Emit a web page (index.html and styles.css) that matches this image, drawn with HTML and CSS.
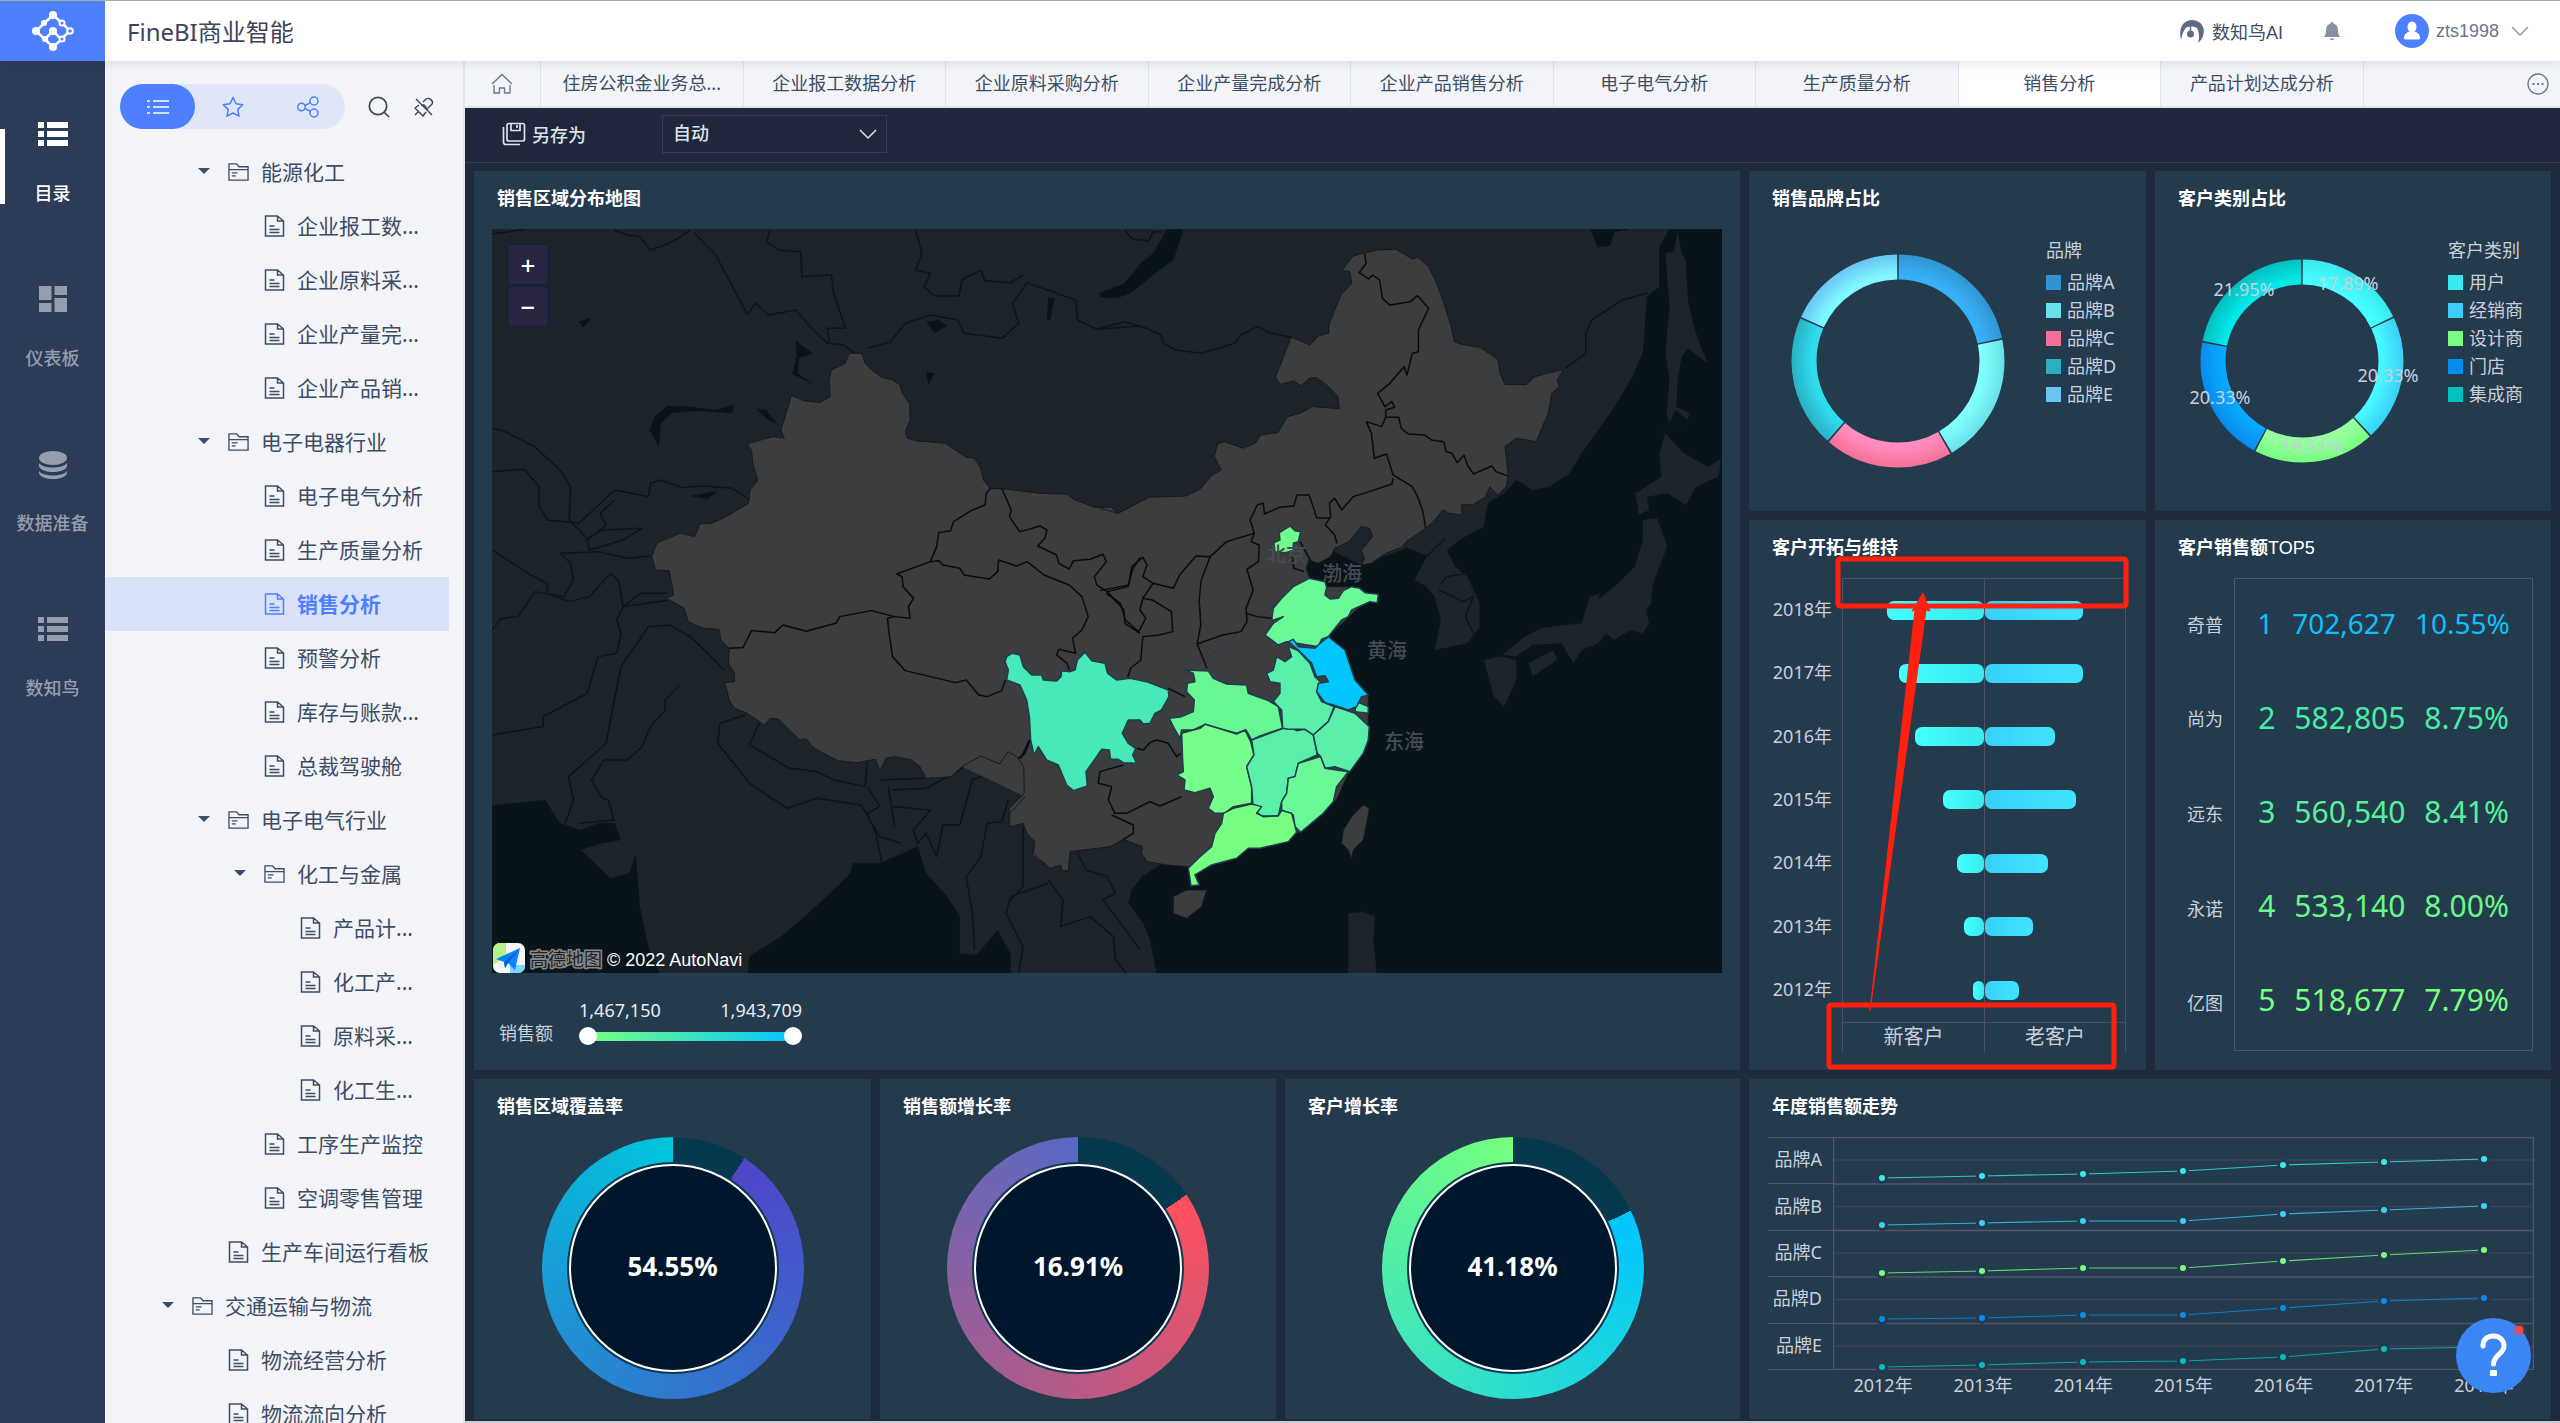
FILE: index.html
```html
<!DOCTYPE html>
<html lang="zh-CN">
<head>
<meta charset="UTF-8">
<meta name="viewport" content="width=device-width, initial-scale=1.0">
<title>FineBI商业智能</title>
<link rel="stylesheet" href="styles.css">
</head>
<body>
<svg class="sprite" aria-hidden="true">
    <symbol id="doc" viewBox="0 0 20 22">
        <path d="M1 1h12l6 5v15H1zM13 1v5h6M5 11h5M5 14.500h10M5 17.500h10" fill="none" stroke="currentColor" stroke-width="1.5"/>
    </symbol>
    <symbol id="folder" viewBox="0 0 22 20">
        <path d="M1 18.500v-17h8l2.500 3H21v14zM1 7.500h20M4 11h6M4 14h4" fill="none" stroke="currentColor" stroke-width="1.4"/>
    </symbol>
    <symbol id="list" viewBox="0 0 30 26">
        <path d="M0 1h6v6H0zM9 1h21v6H9zM0 10h6v6H0zM9 10h21v6H9zM0 19h6v6H0zM9 19h21v6H9z" fill="currentColor"/>
    </symbol>
    <marker id="dot" viewBox="-7 -7 14 14" markerWidth="14" markerHeight="14" markerUnits="userSpaceOnUse"><circle r="6" fill="#243a4d"/><circle r="3" fill="context-stroke"/></marker>
</svg>

<header class="topbar">
    <div class="logo">
        <svg width="44" height="44" viewBox="0 0 44 44" fill="none" stroke="#fff" stroke-width="2.5">
            <path d="M5 22 22 6M5 22l17 16M22 6l9 8M22 38l8-7M14 30l8-8 8 8M31 14l8 8-9 8"/>
            <g fill="#fff" stroke="none">
                <circle cx="5" cy="22" r="4"/><circle cx="22" cy="6" r="4"/><circle cx="22" cy="38" r="4"/>
                <circle cx="22" cy="22" r="4"/><circle cx="13" cy="14" r="3"/><circle cx="14" cy="30" r="3"/>
            </g>
            <g fill="#4d7fff" stroke-width="2">
                <circle cx="31" cy="14" r="2.5"/><circle cx="39" cy="22" r="2.8"/><circle cx="31" cy="30" r="2.5"/>
            </g>
        </svg>
    </div>
    <h1>FineBI商业智能</h1>
    <div class="top-tools">
        <a class="ai" href="#">
            <svg width="25" height="25" viewBox="0 0 25 25"><path d="M1 21C-2 8 4 1 12 1c9 0 14 8 11 16-1 3-3 5-5 7 2-6 1-11-1-15-5-2-10-2-12 1-2 3-3 6-4 11z" fill="#5d6b82"/><circle cx="10.5" cy="15" r="3.5" fill="#5d6b82"/><path d="M10.500 7v7" stroke="#5d6b82" stroke-width="1.5"/></svg>
            数知鸟AI
        </a>
        <button class="bell" aria-label="消息">
            <svg width="18" height="20" viewBox="0 0 18 20"><path d="M9 1c1 0 1.500.7 1.500 1.500C13.500 3.500 15 6 15 9c0 4 .8 5.500 2 7H1c1.200-1.500 2-3 2-7 0-3 1.500-5.500 4.500-6.500C7.500 1.700 8 1 9 1zM6.800 17.500h4.400c-.5 2-3.900 2-4.400 0z" fill="#8590a5"/></svg>
        </button>
        <button class="user">
            <svg width="34" height="34" viewBox="0 0 34 34"><circle cx="17" cy="17" r="17" fill="#4d7fff"/><ellipse cx="17" cy="13" rx="4.5" ry="5.5" fill="#fff"/><path d="M9 24c0-4 3-6 6-6.500h4c3 .5 6 2.500 6 6.500 0 1-1 1.500-2 1.500H11c-1 0-2-.5-2-1.500z" fill="#fff"/></svg>
            <span>zts1998</span>
            <svg width="18" height="10" viewBox="0 0 18 10"><path d="m1 1 8 8 8-8" fill="none" stroke="#8f9aad" stroke-width="1.5"/></svg>
        </button>
    </div>
</header>

<div class="shell">
    <nav class="side">
        <a class="side-item current" href="#"><svg width="30" height="28"><use href="#list"/></svg>目录</a>
        <a class="side-item" href="#"><svg width="30" height="28" viewBox="0 0 30 28"><path d="M1 1h12.500v14H1zM1 18h12.500v9H1zM16.500 1H29v9H16.500zM16.500 13H29v14H16.500z" fill="currentColor"/></svg>仪表板</a>
        <a class="side-item" href="#"><svg width="30" height="30" viewBox="0 0 30 30"><ellipse cx="15" cy="8" rx="14" ry="7" fill="currentColor"/><path d="M1 13c4 6 24 6 28 0v3c-2 8-26 8-28 0zM1 21c4 6 24 6 28 0v2c-2 8-26 8-28 0z" fill="currentColor"/></svg>数据准备</a>
        <a class="side-item" href="#"><svg width="30" height="28"><use href="#list"/></svg>数知鸟</a>
    </nav>

    <aside class="catalog">
        <div class="catalog-tools">
            <div class="switch">
                <button class="on" aria-label="目录"><svg width="24" height="20" viewBox="0 0 24 20"><path d="M1 4h3M7 4h16M1 10h3M7 10h16M1 16h3M7 16h16" stroke="#fff" stroke-width="1.6"/></svg></button>
                <button aria-label="收藏"><svg width="22" height="22" viewBox="0 0 22 22"><path d="m11 1.500 3 6.300 6.700.9-4.900 4.700 1.200 6.800-6-3.200-6 3.200 1.200-6.800L1.300 8.700 8 7.800z" fill="none" stroke="#4d7fff" stroke-width="1.5" stroke-linejoin="round"/></svg></button>
                <button aria-label="分享"><svg width="22" height="22" viewBox="0 0 22 22" fill="none" stroke="#4d7fff" stroke-width="1.5"><circle cx="4.5" cy="11" r="3.7"/><circle cx="17" cy="5" r="4"/><circle cx="17" cy="17" r="4"/><path d="m8 9.500 5.500-2.800M8 12.500l5.500 2.800"/></svg></button>
            </div>
            <button class="tool" aria-label="搜索"><svg width="22" height="22" viewBox="0 0 22 22" fill="none" stroke="#3d4459" stroke-width="1.7"><circle cx="10" cy="10" r="8.7"/><path d="m16 16 5 5"/></svg></button>
            <button class="tool" aria-label="取消固定"><svg width="20" height="20" viewBox="0 0 20 20" fill="none" stroke="#3d4459" stroke-width="1.4"><path d="M2 2l16 16M9 5l3-3c3-2 8 2 6 5l-4 4M5 8l-4 3 8 8 3-4M1 18l4-4M7 8h3l4 5"/></svg></button>
        </div>
        <ul class="tree">
            <li><a class="row l1 folder" href="#"><i></i><svg><use href="#folder"/></svg>能源化工</a></li>
            <li><a class="row l2" href="#"><svg><use href="#doc"/></svg>企业报工数...</a></li>
            <li><a class="row l2" href="#"><svg><use href="#doc"/></svg>企业原料采...</a></li>
            <li><a class="row l2" href="#"><svg><use href="#doc"/></svg>企业产量完...</a></li>
            <li><a class="row l2" href="#"><svg><use href="#doc"/></svg>企业产品销...</a></li>
            <li><a class="row l1 folder" href="#"><i></i><svg><use href="#folder"/></svg>电子电器行业</a></li>
            <li><a class="row l2" href="#"><svg><use href="#doc"/></svg>电子电气分析</a></li>
            <li><a class="row l2" href="#"><svg><use href="#doc"/></svg>生产质量分析</a></li>
            <li><a class="row l2 selected" href="#"><svg><use href="#doc"/></svg>销售分析</a></li>
            <li><a class="row l2" href="#"><svg><use href="#doc"/></svg>预警分析</a></li>
            <li><a class="row l2" href="#"><svg><use href="#doc"/></svg>库存与账款...</a></li>
            <li><a class="row l2" href="#"><svg><use href="#doc"/></svg>总裁驾驶舱</a></li>
            <li><a class="row l1 folder" href="#"><i></i><svg><use href="#folder"/></svg>电子电气行业</a></li>
            <li><a class="row l2 folder" href="#"><i></i><svg><use href="#folder"/></svg>化工与金属</a></li>
            <li><a class="row l3" href="#"><svg><use href="#doc"/></svg>产品计...</a></li>
            <li><a class="row l3" href="#"><svg><use href="#doc"/></svg>化工产...</a></li>
            <li><a class="row l3" href="#"><svg><use href="#doc"/></svg>原料采...</a></li>
            <li><a class="row l3" href="#"><svg><use href="#doc"/></svg>化工生...</a></li>
            <li><a class="row l2" href="#"><svg><use href="#doc"/></svg>工序生产监控</a></li>
            <li><a class="row l2" href="#"><svg><use href="#doc"/></svg>空调零售管理</a></li>
            <li><a class="row l1" href="#"><svg><use href="#doc"/></svg>生产车间运行看板</a></li>
            <li><a class="row l0 folder" href="#"><i></i><svg><use href="#folder"/></svg>交通运输与物流</a></li>
            <li><a class="row l1" href="#"><svg><use href="#doc"/></svg>物流经营分析</a></li>
            <li><a class="row l1" href="#"><svg><use href="#doc"/></svg>物流流向分析</a></li>
        </ul>
    </aside>

    <main class="content">
        <div class="tabs">
            <a class="home" href="#" aria-label="首页"><svg width="22" height="22" viewBox="0 0 22 22"><path d="M1 11 11 1.500 21 11M3 12v8h5.500v-5h5v5H19v-8" fill="none" stroke="#68758a" stroke-width="1.3"/></svg></a>
            <div class="tab-list">
                <a href="#">住房公积金业务总...</a>
                <a href="#">企业报工数据分析</a>
                <a href="#">企业原料采购分析</a>
                <a href="#">企业产量完成分析</a>
                <a href="#">企业产品销售分析</a>
                <a href="#">电子电气分析</a>
                <a href="#">生产质量分析</a>
                <a class="active" href="#">销售分析</a>
                <a href="#">产品计划达成分析</a>
            </div>
            <button class="more" aria-label="更多"><svg width="22" height="22" viewBox="0 0 22 22"><circle cx="11" cy="11" r="10" fill="none" stroke="#68758a" stroke-width="1.3"/><path d="M5.500 10h2v2h-2zM10 10h2v2h-2zM14.500 10h2v2h-2z" fill="#68758a"/></svg></button>
        </div>

        <div class="toolbar">
            <button class="save-as"><svg width="24" height="24" viewBox="0 0 24 24" fill="none" stroke="currentColor" stroke-width="1.7"><rect x="5" y="1.5" width="17.5" height="17.5" rx="2"/><path d="M9 1.500v7h9v-7M15 3v3M1.500 5v15a2.500 2.500 0 0 0 2.500 2.500h14"/></svg>另存为</button>
            <select class="fit" aria-label="适应方式"><option>自动</option></select>
        </div>

        <div class="board">
            <section class="card map-card">
                <h2>销售区域分布地图</h2>
                <div class="map">
                    <svg class="map-canvas" viewBox="0 0 1230 744" preserveAspectRatio="xMidYMid slice">
                        <rect class="land" width="1230" height="744"/>
                        <!-- seas and lakes -->
                        <g class="sea">
                            <g transform="matrix(.4082 0 0 .3333 608 -9)">
                                <path d="M1395 27 1370 80 1370 200 1340 230 1330 400 1300 480 1250 580 1180 700 1150 760 1100 800 1060 810 1020 780 990 820 950 850 940 920 880 960 850 990 870 1040 900 1070 930 1150 930 1220 900 1270 820 1290 835 1200 820 1130 800 1100 770 1080 800 1010 750 985 640 1035 500 950 500 1540 1530 1540 1530 27z"/>
                                <path d="M205 27 180 120 130 165 80 215 40 235 0 230V218L60 190 100 130 130 100 165 27zM1200 27l20 55 30-5 10-40 40-10z"/>
                            </g>
                            <g transform="matrix(.3333 0 0 .3333 468 271)">
                                <path d="M1000 250 1400 600 2300 600V1425H590L570 1320 550 1270 505 1210 515 1170 545 1130 600 1095 900 900z"/>
                            </g>
                            <g transform="matrix(.4209 0 0 .3333 -12 -9)">
                                <path d="M20 1757 155 1740 190 1810 240 1830 280 1810 320 1810 335 1860 290 1870 240 1890 310 1975 355 1960 370 1900 380 2060 400 2180 430 2270H20z"/>
                                <path d="M635 2270 640 2210 715 2150 780 2080 840 2010 880 1960 885 1930 950 1930 1040 1880 1060 1960 1110 2030 1140 2090 1140 2200 1180 2205 1230 2130 1260 2200 1262 2270z"/>
                                <path d="M425 680 403 630 415 590 445 558 500 560 560 570 603 555 600 580 520 572 455 580 430 610zM500 828 565 812 540 838zM655 565 680 570 708 615 685 600zM750 362 790 400 758 415 755 460 795 495 742 462 752 410zM1060 305 1090 300 1110 318 1080 340zM1350 232 1365 235 1355 300 1347 300zM1470 220 1530 205 1568 155V195L1530 228 1485 235zM1060 455l20 5-15 35zM235 305l30-12-20 30z"/>
                            </g>
                        </g>
                        <!-- Sakhalin, Japan, Luzon -->
                        <g class="land">
                            <path transform="matrix(.4082 0 0 .3333 608 -9)" d="M1385 100 1405 95 1415 35 1425 100 1435 120 1440 240 1455 320 1475 390 1490 430 1440 385 1425 410 1415 480 1412 560 1445 580 1440 600 1410 570 1395 610 1388 580 1395 480 1385 400 1395 260zM1385 640 1430 700 1490 740 1522 715 1515 770 1460 800 1435 855 1390 820 1340 830 1345 870 1320 885 1312 820 1375 770 1370 700zM1330 900 1365 895 1390 980 1355 1090 1350 1150 1338 1170 1345 1210 1330 1240 1300 1230 1260 1260 1240 1240 1220 1270 1180 1290 1160 1330 1130 1270 1060 1275 1020 1310 985 1305 1040 1250 1080 1225 1140 1215 1180 1210 1200 1130 1225 1120 1220 1140 1270 1090 1310 1040 1330 960zM940 1320 980 1310 1020 1320 1020 1380 990 1460 965 1430zM1050 1330 1110 1290 1120 1320 1060 1370z"/>
                            <path transform="matrix(.3333 0 0 .3333 468 271)" d="M1165 1240 1210 1235 1245 1250 1240 1320 1250 1420H1165z"/>
                        </g>
                        <!-- borders and rivers of the neighbours -->
                        <g class="abroad">
                            <path transform="matrix(.4209 0 0 .3333 -12 -9)" d="M29 42 110 28M320 32 350 45 380 50 405 90 440 75 470 55 500 30M510 40 560 105 635 283 655 250 685 285 750 270 785 320 825 370 865 375 890 400M920 385 975 365 1010 310 1070 285 1135 300 1150 340 1240 355 1280 310 1265 250 1300 188 1415 240 1420 300 1465 328 1568 318M690 30 680 65 710 90 762 95 765 170 835 165 840 220 868 325 825 325 830 365M1035 30 1050 100 1035 150 1070 160 1055 200 1080 228 1138 228 1145 180 1190 150 1200 182 1260 188 1290 165M29 625 60 635 130 680 190 750 215 800 212 900 250 950M29 755 105 748 140 800 140 858 160 900 235 910 320 810 400 830 405 790 430 780 480 803 530 797 600 805 640 840M250 960 290 930 385 925 340 960 260 990 255 960 300 915 285 880 320 840M29 990 120 1065 160 1090 160 1120 210 1145 260 1130 310 1060 330 1085 340 1160 450 1140M29 1230 50 1195 90 1190 130 1115 200 1130 222 1080 215 1030 190 1000 280 995 350 1015 405 1008M340 1160 380 1120 445 1120M340 1160 325 1200 335 1240 325 1300 280 1310 255 1420 150 1490 150 1520 29 1545M475 1395 440 1440 440 1470 405 1520 385 1580 350 1620 295 1620 265 1680 290 1735 305 1740 318 1800 235 1810M580 1350 500 1250 450 1215 400 1220 335 1340 310 1500 300 1570 210 1670 222 1740 200 1820M630 1485 570 1510 565 1570 640 1690 730 1765 800 1735 905 1755 950 1850 1000 1870M665 1505 640 1575 735 1645 800 1655 840 1680 915 1700 920 1625M920 1700 950 1760 920 1780 940 1840 955 1930M980 1760 1070 1770 1030 1830 1040 1870 1060 1840 1085 1910 1100 1815 1140 1815 1170 1680 1230 1650M950 1680 1060 1675M970 1700 985 1820M980 1710 1060 1705 1190 1615M1255 1740 1240 1805 1205 1810 1190 1910 1155 1970 1170 2080 1175 2190M1290 1820 1290 2000 1255 2050M1420 1900 1440 1950 1490 1970 1510 2020 1480 2040 1540 2140 1568 2190M1350 1990 1260 2030 1250 2080 1290 2180 1280 2260M1350 1980 1385 2040 1380 2120 1450 2090 1505 2150 1510 2220 1535 2260"/>
                            <path transform="matrix(.4082 0 0 .3333 608 -9)" d="M0 325 60 305 115 325 150 345 155 370 185 390 250 400 330 370 345 345 385 320 420 340 470 352M1140 445 1190 400 1190 340 1205 300 1280 240 1340 220M750 985 800 1010 845 955M835 1090 850 1070 890 1062M830 1110 890 1145 915 1130 895 1190 915 1240M1370 628H1440M60 30 80 58 120 62 130 35 155 35"/>
                        </g>
                        <!-- provinces without data -->
                        <g class="empty">
                            <path class="plain" transform="matrix(.3333 0 0 .3333 468 271)" d="M0 60H900L1050 235 195 890 0 797z"/>
                            <path transform="matrix(.4209 0 0 .3333 -12 -9)" d="M1568 845 1515 880 1500 862 1460 862 1410 838 1395 823 1330 820 1240 806 1212 806 1196 780 1188 740 1175 715 1155 712 1105 670 1040 663 1015 655 1010 635 1022 600 1020 550 1003 520 998 495 980 480 955 472 935 455 915 430 908 400 877 400 868 430 835 450 830 480 832 530 808 548 770 542 740 527 715 630 723 655 695 650 635 672 645 690 648 730 660 780 642 810 638 850 585 890 550 910 522 912 510 950 475 940 420 970 408 1010 418 1050 450 1052 460 1125 442 1135 485 1165 495 1205 530 1225 568 1228 572 1260 592 1285 590 1330 605 1360 605 1385 582 1388 592 1440 605 1465 635 1480 675 1515 690 1495 710 1498 735 1530 760 1560 775 1557 790 1580 815 1600 850 1622 895 1628 940 1618 950 1655 965 1615 985 1610 1025 1620 1045 1640 1060 1675 1120 1670 1145 1640 1190 1608 1235 1632 1255 1595 1275 1610 1292 1640 1293 1720 1258 1765 1255 1820 1298 1813 1318 1865 1312 1905 1350 1942 1378 1935 1380 1952 1400 1955 1400 1900 1480 1880 1520 1860 1568 1870"/>
                            <path transform="matrix(.4082 0 0 .3333 608 -9)" d="M0 865 45 880 120 832 210 828 245 808 272 768 297 750 280 710 288 672 305 665 350 685 380 670 395 645 435 638 460 590 490 580 520 560 586 566 583 530 560 500 530 472 512 475 493 498 475 483 442 493 430 472 468 352 515 375 535 348 560 340 562 310 590 225 617 190 612 155 592 152 620 108 645 100 680 90 725 88 765 117 780 112 805 140 825 190 845 260 860 320 868 365 885 373 930 382 975 418 980 460 992 493 1045 494 1065 470 1135 448 1120 480 1125 500 1107 520 1098 580 1068 665 1020 655 992 680 1000 765 995 800 975 825 955 800 945 830 915 853 885 855 887 885 855 880 840 870 820 900 798 925 750 965 740 982 700 1000 665 1030 640 1035 648 1015 640 990 668 950 660 925 640 920 610 965 575 985 565 1010 535 1030 512 1020 505 1045 515 1078"/>
                            <path transform="matrix(.3333 0 0 .3333 468 271)" d="M1050 235 1100 260 1180 260 1250 290 1200 320 1105 410 1155 455 1185 540 1225 590 1225 690 1170 810 1130 900 1020 997 860 1045 800 1085 685 1100 620 1095 560 1085 545 1060 548 1040 490 1018 450 1040 415 1045 365 1050 330 1055 325 1112 305 1110 303 1095 270 1105 220 1060 225 1025 200 1000 190 970 150 980 150 940 195 890"/>
                            <path transform="matrix(.3333 0 0 .3333 468 271)" d="M640 1190 680 1170 740 1170 725 1220 680 1255 640 1240zM1210 915 1228 925 1220 970 1210 1020 1180 1050 1175 1078 1165 1050 1145 1030 1150 990 1175 950z"/>
                        </g>
                        <g class="province-line">
                            <path transform="matrix(.4209 0 0 .3333 -12 -9)" d="M592 1285 625 1283 645 1232 700 1238 720 1215 775 1234 845 1210 855 1190 930 1172 985 1190 1022 1195 1018 1160 1030 1135 1005 1100 1003 1070 990 1062 1070 1025 1085 980 1090 938 1118 932 1125 905 1170 870 1200 855 1203 820 1212 806M1240 806 1262 870 1258 890 1282 935 1305 928 1330 918 1347 930 1342 955 1325 978 1370 1005 1375 1030 1400 1047 1410 1022 1450 1018 1480 1003 1488 1025 1460 1070 1465 1095 1490 1115 1540 1100 1550 1050 1568 1012M1070 1025 1090 1022 1100 1035 1140 1045 1150 1065 1210 1077 1230 1055 1232 1020 1275 1038 1300 1025 1340 1065 1400 1095 1430 1130 1445 1190 1430 1230 1408 1255 1415 1300 1375 1288 1370 1305 1395 1330 1400 1350M985 1190 968 1195 972 1240 980 1310 1010 1352 1130 1388 1155 1380 1185 1425 1205 1430 1240 1412 1248 1380M1490 1115 1530 1170 1532 1210 1568 1240M1305 1560 1285 1615"/>
                            <path transform="matrix(.4082 0 0 .3333 608 -9)" d="M648 100 652 130 635 158 658 177 668 165 685 180 692 235 710 255 760 245 778 227 805 265 780 330 780 395 765 400 752 465 745 440 710 490 680 520 698 560 715 545 722 562 700 570 700 592M652 605 690 620 700 592 732 592 738 625 755 642 795 645 812 660 842 665 848 695 862 700 875 728 892 705 900 735 915 762 960 738 970 755 1000 768M652 605 665 640 672 715 702 702 718 765 765 800 778 830 790 870 798 925M718 775 715 792 660 815 620 830 592 870 575 835 562 850 565 890 552 915 575 945 580 970M565 895 530 893 525 870 512 825 482 825 475 858 440 862 403 882 400 850 385 855 368 900 378 940 370 965 390 975 388 1025 360 1048 375 1110 358 1165 360 1205 345 1235 300 1245 238 1272 247 1215 243 1140 248 1080 270 1010 310 965 378 940M358 1180 385 1190 425 1195M0 1112 70 1095 78 1040 105 1012 115 1035 105 1070 130 1090 180 1105 195 1065 235 1008 270 1010M15 1120 50 1150 62 1200 95 1235 112 1195 98 1170 105 1135 128 1140 175 1175 178 1235 145 1245 105 1250 100 1320 75 1345 68 1372M130 1090 105 1135M238 1272 262 1345M490 965 515 1020M470 1005 475 1045 500 1055"/>
                            <path transform="matrix(.3333 0 0 .3333 468 271)" d="M490 795 420 815 415 850 455 860 445 900 465 940 500 940 570 905 600 918 665 890M530 745 550 750 570 728 590 720 625 730 650 770 662 760M455 945 520 975 520 1000 490 1018M625 565 675 590M210 720 195 760 175 775"/>
                        </g>
                        <!-- provinces coloured by sales -->
                        <g class="sales" transform="matrix(.3333 0 0 .3333 468 271)">
                            <path fill="#47e9b8" d="M140 470 155 460 180 465 190 500 215 525 245 525 250 540 290 543 303 530 305 512 330 515 345 510 352 480 375 457 395 482 435 490 443 520 470 540 510 535 560 545 625 570 627 590 605 630 585 640 570 670 550 672 540 660 505 660 487 700 505 730 527 745 518 765 530 790 490 788 475 778 452 778 448 750 425 748 403 780 378 815 382 858 340 872 320 855 295 795 260 780 235 740 222 765 212 720 208 650 200 600 180 555 140 540 145 510 135 485z"/>
                            <path fill="#70fb8c" d="M990 78 1005 92 1022 95 1015 125 1000 130 1000 152 975 158 945 155 942 128 960 120 958 98z"/>
                            <path fill="#69f997" d="M1048 235 1095 245 1100 262 1095 285 1110 297 1135 295 1150 272 1175 260 1200 265 1215 278 1255 283 1252 308 1230 305 1175 330 1165 350 1145 360 1105 410 1085 418 1075 440 1025 432 980 425 955 435 915 405 940 370 970 350 935 362 940 325 965 295 1000 260z"/>
                            <path fill="#69f794" d="M675 510 745 513 760 535 800 552 860 555 865 580 925 602 955 620 968 685 900 708 875 720 858 690 830 700 775 685 735 673 700 690 665 690 660 715 640 680 628 655 665 650 700 635 703 600 680 575 682 550 705 545 700 520z"/>
                            <path fill="#76ff8a" d="M665 700 720 685 735 673 775 685 830 702 855 690 872 725 882 765 860 800 875 860 875 910 820 920 795 940 765 940 745 925 760 890 750 865 705 878 672 870 675 840 650 825 670 815 668 780z"/>
                            <path fill="#5af0aa" d="M875 720 985 680 1010 692 1035 688 1060 705 1072 765 1015 790 1005 830 985 835 980 880 965 905 955 948 905 948 880 930 875 860 860 800 882 765z"/>
                            <path fill="#5af0aa" d="M985 440 1015 452 1050 490 1065 530 1085 550 1070 575 1085 605 1122 620 1105 665 1060 705 1035 688 985 688 968 685 965 630 940 605 960 580 960 550 930 545 920 520 940 510 950 470 975 485 995 470z"/>
                            <path fill="#5af0aa" d="M1125 620 1185 640 1228 680 1225 720 1210 760 1170 815 1125 800 1095 805 1082 770 1072 760 1060 705 1105 665zM1190 605 1225 620 1225 640 1185 635z"/>
                            <path fill="#6bf997" d="M1082 770 1095 805 1165 815 1130 860 1120 905 1090 940 1022 997 1005 980 1000 945 965 930 965 905 980 880 985 835 1005 830 1015 790z"/>
                            <path fill="#76ff80" d="M790 940 820 925 875 912 905 920 890 940 910 950 955 948 965 932 995 940 1010 997 985 1025 900 1045 865 1045 830 1075 755 1095 705 1125 718 1155 693 1157 685 1105 720 1070 755 1040 765 1000 785 970z"/>
                            <path fill="#03c6ff" d="M985 425 1000 418 1015 440 1065 445 1080 430 1105 410 1155 450 1185 540 1225 585 1205 590 1190 620 1165 630 1120 615 1095 608 1070 575 1075 550 1105 545 1095 527 1070 530 1055 490 1015 450z"/>
                        </g>
                        <g class="place">
                            <text x="774" y="333">北京</text>
                            <text x="830" y="352">渤海</text>
                            <text x="875" y="429">黄海</text>
                            <text x="892" y="520">东海</text>
                        </g>
                    </svg>
                    <div class="zoom">
                        <button aria-label="放大">+</button>
                        <button aria-label="缩小">−</button>
                    </div>
                    <div class="credit">
                        <svg width="32" height="30" viewBox="0 0 32 30"><rect width="32" height="30" rx="7" fill="#f4f6f8"/><path d="M7 0h6v14L0 22V7a7 7 0 0 1 7-7z" fill="#b5f08c"/><path d="M17 22h15v1a7 7 0 0 1-7 7h-8z" fill="#7ad7ff"/><path d="M27 5 3 16l8 3 1 6 3-5 7 7z" fill="#0a84ff"/><path d="M27 5 11 19l1 6 3-5z" fill="#0562d8"/></svg>
                        <span class="amap">高德地图</span>
                        <span>© 2022 AutoNavi</span>
                    </div>
                </div>
                <div class="range-legend">
                    <span>销售额</span>
                    <div class="range">
                        <div class="range-values"><span>1,467,150</span><span>1,943,709</span></div>
                        <div class="range-track">
                            <input type="range" min="1467150" max="1943709" value="1467150" aria-label="最小值">
                            <input type="range" min="1467150" max="1943709" value="1943709" aria-label="最大值">
                        </div>
                    </div>
                </div>
            </section>

            <section class="card">
                <h2>销售品牌占比</h2>
                <div class="donut-row brand">
                    <svg class="donut" width="214" height="214" viewBox="-107 -107 214 214">
                        <defs>
                            <radialGradient id="b1" gradientUnits="userSpaceOnUse" r="107" cx="0" cy="0"><stop offset=".8" stop-color="#38b0f8"/><stop offset="1" stop-color="#3194d2"/></radialGradient>
                            <radialGradient id="b2" gradientUnits="userSpaceOnUse" r="107" cx="0" cy="0"><stop offset=".8" stop-color="#80ffff"/><stop offset="1" stop-color="#68dfe6"/></radialGradient>
                            <radialGradient id="b3" gradientUnits="userSpaceOnUse" r="107" cx="0" cy="0"><stop offset=".8" stop-color="#ff8cc0"/><stop offset="1" stop-color="#f57094"/></radialGradient>
                            <radialGradient id="b4" gradientUnits="userSpaceOnUse" r="107" cx="0" cy="0"><stop offset=".8" stop-color="#2fdcee"/><stop offset="1" stop-color="#2aafc2"/></radialGradient>
                            <radialGradient id="b5" gradientUnits="userSpaceOnUse" r="107" cx="0" cy="0"><stop offset=".8" stop-color="#80f8ff"/><stop offset="1" stop-color="#68c4f4"/></radialGradient>
                        </defs>
                        <g class="ring" transform="rotate(-90)">
                            <circle r="94" pathLength="360" stroke="url(#b1)" stroke-dasharray="77 283" stroke-dashoffset="-.5"/>
                            <circle r="94" pathLength="360" stroke="url(#b2)" stroke-dasharray="71 289" stroke-dashoffset="-78.5"/>
                            <circle r="94" pathLength="360" stroke="url(#b3)" stroke-dasharray="70 290" stroke-dashoffset="-150.5"/>
                            <circle r="94" pathLength="360" stroke="url(#b4)" stroke-dasharray="72 288" stroke-dashoffset="-221.5"/>
                            <circle r="94" pathLength="360" stroke="url(#b5)" stroke-dasharray="65 295" stroke-dashoffset="-294.5"/>
                        </g>
                    </svg>
                    <div class="legend">
                        <p>品牌</p>
                        <ul>
                            <li><i class="b1"></i>品牌A</li>
                            <li><i class="b2"></i>品牌B</li>
                            <li><i class="b3"></i>品牌C</li>
                            <li><i class="b4"></i>品牌D</li>
                            <li><i class="b5"></i>品牌E</li>
                        </ul>
                    </div>
                </div>
            </section>

            <section class="card">
                <h2>客户类别占比</h2>
                <div class="donut-row client">
                    <svg class="donut" width="202" height="202" viewBox="-101 -101 202 202">
                        <defs>
                            <radialGradient id="c1" gradientUnits="userSpaceOnUse" r="101" cx="0" cy="0"><stop offset=".8" stop-color="#47ffff"/><stop offset="1" stop-color="#38eaf0"/></radialGradient>
                            <radialGradient id="c2" gradientUnits="userSpaceOnUse" r="101" cx="0" cy="0"><stop offset=".8" stop-color="#47f8ff"/><stop offset="1" stop-color="#3bcff8"/></radialGradient>
                            <radialGradient id="c3" gradientUnits="userSpaceOnUse" r="101" cx="0" cy="0"><stop offset=".8" stop-color="#98ffa0"/><stop offset="1" stop-color="#76ff80"/></radialGradient>
                            <radialGradient id="c4" gradientUnits="userSpaceOnUse" r="101" cx="0" cy="0"><stop offset=".8" stop-color="#08a8ff"/><stop offset="1" stop-color="#088cee"/></radialGradient>
                            <radialGradient id="c5" gradientUnits="userSpaceOnUse" r="101" cx="0" cy="0"><stop offset=".8" stop-color="#02e8e8"/><stop offset="1" stop-color="#02bfc0"/></radialGradient>
                        </defs>
                        <g class="ring" transform="rotate(-90)">
                            <circle r="89" pathLength="360" stroke="url(#c1)" stroke-dasharray="63.4 296.6" stroke-dashoffset="-.5"/>
                            <circle r="89" pathLength="360" stroke="url(#c2)" stroke-dasharray="72.2 287.8" stroke-dashoffset="-64.9"/>
                            <circle r="89" pathLength="360" stroke="url(#c3)" stroke-dasharray="69.2 290.8" stroke-dashoffset="-138.1"/>
                            <circle r="89" pathLength="360" stroke="url(#c4)" stroke-dasharray="72.2 287.8" stroke-dashoffset="-208.3"/>
                            <circle r="89" pathLength="360" stroke="url(#c5)" stroke-dasharray="78 282" stroke-dashoffset="-281.5"/>
                        </g>
                        <g class="share">
                            <text x="46" y="-71">17.89%</text>
                            <text x="86" y="21">20.33%</text>
                            <text x="10" y="92">19.51%</text>
                            <text x="-82" y="43">20.33%</text>
                            <text x="-58" y="-65">21.95%</text>
                        </g>
                    </svg>
                    <div class="legend">
                        <p>客户类别</p>
                        <ul>
                            <li><i class="c1"></i>用户</li>
                            <li><i class="c2"></i>经销商</li>
                            <li><i class="c3"></i>设计商</li>
                            <li><i class="c4"></i>门店</li>
                            <li><i class="c5"></i>集成商</li>
                        </ul>
                    </div>
                </div>
            </section>

            <section class="card">
                <h2>客户开拓与维持</h2>
                <div class="pyramid">
                    <span>2018年</span><div class="new"><b style="width:69%"></b></div><div class="old"><b style="width:70%"></b></div>
                    <span>2017年</span><div class="new"><b style="width:60%"></b></div><div class="old"><b style="width:70%"></b></div>
                    <span>2016年</span><div class="new"><b style="width:49%"></b></div><div class="old"><b style="width:50%"></b></div>
                    <span>2015年</span><div class="new"><b style="width:29%"></b></div><div class="old"><b style="width:65%"></b></div>
                    <span>2014年</span><div class="new"><b style="width:19%"></b></div><div class="old"><b style="width:45%"></b></div>
                    <span>2013年</span><div class="new"><b style="width:14%"></b></div><div class="old"><b style="width:34%"></b></div>
                    <span>2012年</span><div class="new"><b style="width:8%"></b></div><div class="old"><b style="width:24%"></b></div>
                    <span></span><div class="axis">新客户</div><div class="axis">老客户</div>
                </div>
                <svg class="markup" viewBox="0 0 397 550" preserveAspectRatio="none">
                    <g fill="none" stroke="#ff2010" stroke-width="5">
                        <rect x="89" y="39" width="288" height="47" rx="2"/>
                        <rect x="80" y="485" width="285" height="62" rx="2"/>
                    </g>
                    <path d="M121 491 166 90l-3 1 11-18 7 18-4-1z" fill="#ff2010" stroke="#ff2010"/>
                </svg>
            </section>

            <section class="card">
                <h2>客户销售额<span>TOP5</span></h2>
                <div class="top5">
                    <div class="names"><span>奇普</span><span>尚为</span><span>远东</span><span>永诺</span><span>亿图</span></div>
                    <div class="ranks">
                        <p class="first"><span>1</span><span>702,627</span><span>10.55%</span></p>
                        <p class="second"><span>2</span><span>582,805</span><span>8.75%</span></p>
                        <p class="third"><span>3</span><span>560,540</span><span>8.41%</span></p>
                        <p class="fourth"><span>4</span><span>533,140</span><span>8.00%</span></p>
                        <p class="fifth"><span>5</span><span>518,677</span><span>7.79%</span></p>
                    </div>
                </div>
            </section>

            <section class="card">
                <h2>销售区域覆盖率</h2>
                <div class="gauge cover"><div>54.55%</div></div>
            </section>
            <section class="card">
                <h2>销售额增长率</h2>
                <div class="gauge sales-up"><div>16.91%</div></div>
            </section>
            <section class="card">
                <h2>客户增长率</h2>
                <div class="gauge client-up"><div>41.18%</div></div>
            </section>

            <section class="card trend-card">
                <h2>年度销售额走势</h2>
                <div class="trend">
                    <div class="brands"><span>品牌A</span><span>品牌B</span><span>品牌C</span><span>品牌D</span><span>品牌E</span></div>
                    <svg class="plot" viewBox="0 0 701 233">
                        <path d="M0 23H701M0 69.500H701M0 116H701M0 162.500H701M0 209H701" stroke="#3c4557" stroke-width="1.5"/>
                        <path d="M0 .5H701M0 47H701M0 93.500H701M0 140H701M0 186.500H701M0 232.500H701M.5 0V233M700.500 0V233" stroke="#525669" stroke-width="1.5"/>
                        <g class="series">
                            <polyline stroke="#37eaf0" points="49,41 149,39 250,37 350,34 450,28 551,25 651,22"/>
                            <polyline stroke="#3bcff8" points="49,88 149,86 250,84 350,84 450,77 551,73 651,69"/>
                            <polyline stroke="#76ff80" points="49,136 149,134 250,131 350,131 450,124 551,118 651,113"/>
                            <polyline stroke="#088cee" points="49,182 149,181 250,178 350,178 450,171 551,164 651,161"/>
                            <polyline stroke="#02bfc0" points="49,230 149,228 250,225 350,224 450,220 551,212 651,210"/>
                        </g>
                    </svg>
                    <div class="years"><span>2012年</span><span>2013年</span><span>2014年</span><span>2015年</span><span>2016年</span><span>2017年</span><span>2018年</span></div>
                </div>
            </section>
        </div>
    </main>
</div>

<button class="help" aria-label="帮助">
    <svg width="75" height="75" viewBox="0 0 75 75"><path d="M27 28c0-7 4.500-10 10.500-10S48 22 48 28c0 8-10.500 9-10.500 18" fill="none" stroke="#fff" stroke-width="5" stroke-linecap="round"/><rect x="34" y="52" width="7" height="6" rx="1" fill="#fff"/></svg>
</button>
</body>
</html>
```

FILE: styles.css
```css
* {
    box-sizing: border-box;
}
body {
    margin: 0;
    height: 100vh;
    display: flex;
    flex-direction: column;
    overflow: hidden;
    font-family: "Noto Sans", "Noto Sans CJK SC", sans-serif;
    font-size: 18px;
    color: #3d4d66;
    background: #f2f4f8;
}
a {
    color: inherit;
    text-decoration: none;
}
button {
    padding: 0;
    border: none;
    background: none;
    color: inherit;
    font: inherit;
    cursor: pointer;
}
ul, p, h1, h2 {
    margin: 0;
    padding: 0;
    list-style: none;
}
svg {
    flex: none;
}
.sprite {
    position: absolute;
    width: 0;
    height: 0;
}

/* top bar */
.topbar {
    display: flex;
    align-items: center;
    height: 61px;
    flex: none;
    background: #fff;
    border-top: 1px solid #9fb39f;
    box-shadow: 0 2px 10px rgba(40, 50, 70, 0.12);
    z-index: 2;
}
.logo {
    width: 105px;
    height: 60px;
    display: flex;
    align-items: center;
    justify-content: center;
    background: #4d7fff;
}
.topbar h1 {
    margin-left: 22px;
    padding-bottom: 2px;
    font-size: 24px;
    font-weight: 400;
    color: #3d4459;
}
.top-tools {
    display: flex;
    align-items: center;
    margin-left: auto;
    padding-right: 31px;
    font-family: "Liberation Sans", "Noto Sans CJK SC", sans-serif;
}
.ai, .user {
    display: flex;
    align-items: center;
    gap: 7px;
}
.bell {
    display: flex;
    margin: 0 54px 0 40px;
}
.user {
    color: #68758a;
}
.user span {
    margin-right: 5px;
}

.shell {
    flex: 1;
    min-height: 0;
    display: flex;
}

/* left navigation */
.side {
    width: 105px;
    flex: none;
    display: flex;
    flex-direction: column;
    gap: 79px;
    padding-top: 59px;
    background: #2c3c57;
}
.side-item {
    position: relative;
    height: 86px;
    display: flex;
    flex-direction: column;
    align-items: center;
    justify-content: space-between;
    color: #959eae;
    font-weight: 500;
    line-height: 26px;
}
.side-item.current {
    color: #fff;
}
.side-item.current::before {
    content: "";
    position: absolute;
    left: 0;
    top: 9px;
    width: 5px;
    height: 75px;
    background: #fff;
}

/* catalog tree */
.catalog {
    width: 360px;
    flex: none;
    overflow: hidden;
    border-right: 2px solid #e2e6ec;
}
.catalog-tools {
    display: flex;
    align-items: center;
    height: 84px;
    padding: 7px 0 0 15px;
}
.switch {
    display: flex;
    width: 225px;
    height: 45px;
    margin-right: 23px;
    border-radius: 23px;
    background: #dfe6f7;
}
.switch button {
    flex: 1;
    display: flex;
    align-items: center;
    justify-content: center;
    border-radius: 23px;
}
.switch .on {
    background: #4d7fff;
}
.tool {
    display: flex;
    margin-right: 24px;
}
.row {
    display: flex;
    align-items: center;
    gap: 12px;
    height: 54px;
    margin-right: 14px;
    padding-bottom: 2px;
    border-radius: 2px;
    font-size: 21px;
    white-space: nowrap;
}
.row svg {
    width: 21px;
    height: 22px;
    margin-top: 2px;
}
.row i {
    width: 0;
    margin-right: 6px;
    border: 6px solid transparent;
    border-top-color: #3d4d66;
    border-bottom: none;
}
.l0 { padding-left: 87px; }
.l1 { padding-left: 123px; }
.l2 { padding-left: 159px; }
.l3 { padding-left: 195px; }
.l0.folder { padding-left: 57px; }
.l1.folder { padding-left: 93px; }
.l2.folder { padding-left: 129px; }
.row.selected {
    background: #dae2f9;
    color: #4d7fff;
    font-weight: 700;
}

/* tabs and toolbar */
.content {
    flex: 1;
    min-width: 0;
    display: flex;
    flex-direction: column;
}
.tabs {
    display: flex;
    height: 47px;
    flex: none;
    border-bottom: 2px solid #e1e6ea;
}
.home {
    width: 76px;
    display: flex;
    align-items: center;
    padding-left: 26px;
    border-right: 1px solid #dfe2e8;
}
.tab-list {
    width: 87%;
    display: grid;
    grid-template-columns: repeat(9, 1fr);
}
.tab-list a {
    display: flex;
    align-items: center;
    justify-content: center;
    padding-bottom: 3px;
    border-right: 1px solid #dfe2e8;
    white-space: nowrap;
}
.tab-list .active {
    background: #fff;
}
.more {
    display: flex;
    align-items: center;
    margin-left: auto;
    padding-right: 11px;
}
.toolbar {
    display: flex;
    align-items: center;
    height: 55px;
    flex: none;
    padding: 0 0 2px 37px;
    background: #20263b;
    border-bottom: 1px solid #343d50;
    color: #dce3ea;
}
.save-as {
    display: flex;
    align-items: center;
    gap: 6px;
    margin-right: 76px;
    font-weight: 500;
}
.fit {
    width: 225px;
    height: 38px;
    padding: 0 10px 2px;
    border: 1px solid #343d55;
    appearance: none;
    color: #dce3ea;
    font: inherit;
    font-weight: 500;
    background: #20263b url('data:image/svg+xml,<svg xmlns="http://www.w3.org/2000/svg" width="18" height="11"><path d="m1 1 8 8 8-8" fill="none" stroke="%23dce3ea" stroke-width="1.5"/></svg>') no-repeat right 9px center;
}

/* dashboard */
.board {
    flex: 1;
    min-height: 0;
    display: grid;
    grid-template-columns: minmax(0, 397fr) minmax(0, 396fr) minmax(0, 455fr) minmax(0, 397fr) minmax(0, 396fr);
    grid-template-rows: minmax(0, 340fr) minmax(0, 550fr) minmax(0, 340fr);
    gap: 9px;
    padding: 8px 9px 2px;
    background: #1f2a3c;
    border-bottom: 2px solid #c9cdd5;
}
.card {
    position: relative;
    display: flex;
    flex-direction: column;
    background: #243a4d;
    color: #c9d0dc;
}
.card h2 {
    height: 58px;
    flex: none;
    padding-left: 23px;
    color: #fff;
    font-size: 18px;
    line-height: 54px;
    font-weight: 700;
}
.card h2 span {
    font-family: "Liberation Sans", sans-serif;
    font-weight: 400;
}
.map-card {
    grid-column: 1 / 4;
    grid-row: 1 / 3;
}
.trend-card {
    grid-column: 4 / 6;
}

/* map */
.map {
    position: relative;
    flex: 1;
    min-height: 0;
    margin: 0 18px;
    overflow: hidden;
}
.map-canvas {
    display: block;
    width: 100%;
    height: 100%;
}
.map-canvas path {
    vector-effect: non-scaling-stroke;
    stroke-linejoin: round;
}
.land {
    fill: #1c232b;
}
.sea {
    fill: #09131a;
}
.abroad {
    fill: none;
    stroke: #0c131b;
    stroke-width: 1.5px;
}
.empty {
    fill: #3b3d3f;
    stroke: #17191b;
}
.empty .plain {
    stroke: none;
}
.province-line {
    fill: none;
    stroke: #0a0b0c;
    stroke-width: 1.5px;
}
.sales {
    stroke: #1f3d4d;
    stroke-width: 1.5px;
}
.place {
    fill: #454b54;
    font-size: 20px;
    font-weight: 500;
}
.zoom {
    position: absolute;
    left: 15px;
    top: 15px;
    width: 42px;
    display: flex;
    flex-direction: column;
    gap: 1px;
}
.zoom button {
    height: 41px;
    border: 1px solid #10203c;
    border-radius: 4px;
    background: #272540;
    color: #fff;
    font-size: 26px;
    font-weight: 500;
    line-height: 36px;
}
.credit {
    position: absolute;
    left: 1px;
    bottom: 0;
    display: flex;
    align-items: flex-end;
    gap: 5px;
    height: 30px;
    color: #fff;
    line-height: 26px;
    font-family: "Liberation Sans", "Noto Sans CJK SC", sans-serif;
}
.amap {
    color: #222;
    -webkit-text-stroke: 3px #888;
    paint-order: stroke fill;
}
.range-legend {
    display: flex;
    align-items: flex-end;
    height: 97px;
    gap: 26px;
    padding: 0 25px 25px;
    line-height: 24px;
}
.range {
    width: 223px;
}
.range-values {
    display: flex;
    justify-content: space-between;
    margin-bottom: 5px;
    color: #e8edf5;
}
.range-track {
    position: relative;
    height: 18px;
    background: linear-gradient(90deg, #76ff80, #03c6ff) center / calc(100% - 18px) 9px no-repeat;
}
.range-track input {
    position: absolute;
    left: 0;
    top: 0;
    width: 100%;
    height: 18px;
    margin: 0;
    appearance: none;
    background: none;
    pointer-events: none;
}
.range-track input::-webkit-slider-thumb {
    appearance: none;
    width: 18px;
    height: 18px;
    border-radius: 50%;
    background: #fff;
    pointer-events: auto;
}

/* donuts */
.donut-row {
    display: flex;
    align-items: flex-start;
}
.donut {
    overflow: visible;
}
.ring {
    fill: none;
    stroke-width: 25px;
}
.brand .donut {
    margin: 25px 41px 0 42px;
}
.client .donut {
    margin: 31px 45px 0 46px;
}
.share {
    fill: #c9d0dc;
    text-anchor: middle;
}
.legend {
    margin-top: 7px;
    line-height: 28px;
    white-space: nowrap;
}
.legend p {
    margin-bottom: 4px;
}
.legend li {
    display: flex;
    align-items: center;
    gap: 6px;
}
.legend i {
    width: 15px;
    height: 15px;
}
.b1 { background: #3194d2; }
.b2 { background: #68e2e8; }
.b3 { background: #f57094; }
.b4 { background: #2aafc2; }
.b5 { background: #68c4f4; }
.c1 { background: #38eaf0; }
.c2 { background: #3bcff8; }
.c3 { background: #76ff80; }
.c4 { background: #088cee; }
.c5 { background: #02bfc0; }

/* new and returning customers */
.pyramid {
    flex: 1;
    min-height: 0;
    display: grid;
    grid-template-columns: 93px 1fr 1fr;
    grid-template-rows: repeat(7, 1fr) 30px;
    padding: 0 20px 18px 0;
}
.pyramid span {
    align-self: center;
    padding: 0 10px 4px 0;
    text-align: right;
}
.pyramid div {
    display: flex;
    align-items: center;
    border-left: 1px solid #4a5164;
}
.pyramid div:nth-child(3n) {
    border-right: 1px solid #4a5164;
}
.pyramid div:nth-child(-n+3) {
    border-top: 1px solid #4a5164;
}
.pyramid b {
    height: 19px;
    border-radius: 7px;
}
.new {
    justify-content: flex-end;
}
.new b {
    background: linear-gradient(90deg, #44ffff, #38eaf0);
}
.old b {
    background: linear-gradient(90deg, #38d0f8, #40e4ff);
}
.pyramid .axis {
    justify-content: center;
    padding-bottom: 4px;
    border-top: 1px solid #4a5164;
    font-size: 20px;
}
.markup {
    position: absolute;
    left: 0;
    top: 0;
    width: 100%;
    height: 100%;
    pointer-events: none;
}

/* top five */
.top5 {
    flex: 1;
    min-height: 0;
    display: flex;
    padding: 0 18px 19px 32px;
}
.names, .ranks {
    display: flex;
    flex-direction: column;
}
.names {
    width: 47px;
}
.names span, .ranks p {
    flex: 1;
    display: flex;
    align-items: center;
}
.names span {
    padding-bottom: 3px;
}
.ranks {
    flex: 1;
    border: 1px solid #4f566a;
}
.ranks p {
    justify-content: center;
    gap: 19px;
    padding-bottom: 6px;
    font-size: 30px;
}
.ranks .first { color: #0cc0ff; font-size: 28px; }
.ranks .second { color: #4aeba6; }
.ranks .third { color: #58f09c; }
.ranks .fourth { color: #6af88a; }
.ranks .fifth { color: #78ff80; }

/* gauges */
.gauge {
    width: 262px;
    height: 262px;
    margin: 0 auto;
    display: flex;
    align-items: center;
    justify-content: center;
    border-radius: 50%;
}
.gauge div {
    width: 208px;
    height: 208px;
    border: 2px solid #fff;
    border-radius: 50%;
    box-shadow: 0 0 0 2px #103850;
    background: #00162c;
    color: #fff;
    font-size: 26px;
    font-weight: 700;
    line-height: 200px;
    text-align: center;
}
.cover {
    background: conic-gradient(#06394e 33deg, #5045c8 33deg, #2f78cf 180deg, #00c5dd);
}
.sales-up {
    background: conic-gradient(#06394e 56deg, #ff505e 56deg, #b85a85 180deg, #5868c4);
}
.client-up {
    background: conic-gradient(#06394e 64deg, #00c5ff 64deg, #2bddd0 180deg, #76ff80);
}

/* yearly trend */
.trend {
    display: grid;
    grid-template-columns: 65px 1fr;
    margin: 0 17px 0 19px;
}
.brands {
    display: flex;
    flex-direction: column;
    border-bottom: 1px solid #525669;
}
.brands span {
    flex: 1;
    display: flex;
    align-items: center;
    justify-content: flex-end;
    padding: 0 11px 5px 0;
    border-top: 1px solid #525669;
}
.plot {
    display: block;
    width: 100%;
}
.series polyline {
    fill: none;
    stroke-width: 1.2px;
    stroke-opacity: 0.8;
    marker: url(#dot);
}
.years {
    grid-column: 2;
    display: grid;
    grid-template-columns: repeat(7, 1fr);
    line-height: 30px;
    text-align: center;
}

.help {
    position: fixed;
    right: 29px;
    bottom: 30px;
    width: 75px;
    height: 75px;
    border-radius: 50%;
    background: #3b87f5;
}
.help::after {
    content: "";
    position: absolute;
    right: 8px;
    top: 8px;
    width: 8px;
    height: 8px;
    border-radius: 50%;
    background: #f2494c;
    box-shadow: 0 0 4px #f2494c;
}
```
